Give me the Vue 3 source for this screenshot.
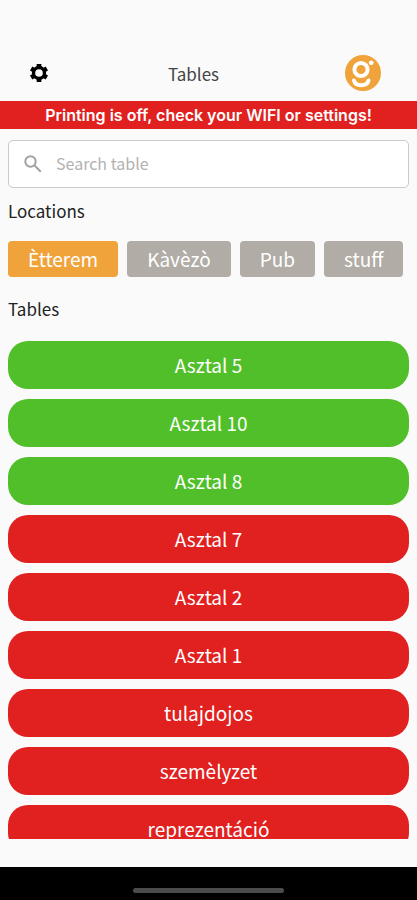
<template>
    <div class="screen">
        <header class="header">
            <button class="icon-button" aria-label="Settings">
                <svg class="gear" viewBox="0 0 24 24" fill="none" stroke="#000">
                    <circle cx="12" cy="12" r="6.600" stroke-width="4" />
                    <g stroke-width="5.600" stroke-linecap="butt">
                        <path d="M12 1.200v4M12 18.800v4" />
                        <path d="M2.600 6.600l3.500 2M17.900 15.400l3.500 2" />
                        <path d="M2.600 17.400l3.500-2M17.900 8.600l3.500-2" />
                    </g>
                </svg>
            </button>
            <h1 class="title">Tables</h1>
            <div class="logo-box">
                <svg class="logo" viewBox="0 0 36 36" aria-hidden="true">
                    <circle cx="18" cy="18" r="18" fill="#f0a33b" />
                    <circle cx="16" cy="14.500" r="6.600" fill="none" stroke="#fff" stroke-width="4" />
                    <path d="M9 25.500c1.500 6.300 13 6.300 14.500 0" fill="none" stroke="#fff" stroke-width="4" stroke-linecap="round" />
                    <circle cx="26.200" cy="7.800" r="2.400" fill="#fff" />
                </svg>
            </div>
        </header>
        <p class="banner">Printing is off, check your WIFI or settings!</p>
        <main class="content">
            <label class="search">
                <svg class="search-icon" viewBox="0 0 18 18" fill="none" stroke="#a5a3a1" stroke-width="2">
                    <circle cx="6.500" cy="6.500" r="5.200" />
                    <path d="M10.500 10.500l6.300 6.300" />
                </svg>
                <input type="text" v-model="search" placeholder="Search table" aria-label="Search table">
            </label>
            <h2 class="section-title">Locations</h2>
            <div class="locations">
                <button
                    v-for="location in locations"
                    :key="location"
                    class="location"
                    :class="{ active: location === selected }"
                    @click="selected = location"
                >{{ location }}</button>
            </div>
            <h2 class="section-title">Tables</h2>
            <div class="tables">
                <button
                    v-for="table in filteredTables"
                    :key="table.name"
                    class="table"
                    :class="{ free: table.free }"
                >{{ table.name }}</button>
            </div>
        </main>
        <footer class="nav-bar">
            <span class="handle"></span>
        </footer>
    </div>
</template>

<script setup>
import { ref, computed } from 'vue'

const search = ref('')
const selected = ref('Ètterem')
const locations = ['Ètterem', 'Kàvèzò', 'Pub', 'stuff']

const tables = ref([
    { name: 'Asztal 5', free: true },
    { name: 'Asztal 10', free: true },
    { name: 'Asztal 8', free: true },
    { name: 'Asztal 7', free: false },
    { name: 'Asztal 2', free: false },
    { name: 'Asztal 1', free: false },
    { name: 'tulajdojos', free: false },
    { name: 'szemèlyzet', free: false },
    { name: 'reprezentáció', free: false }
])

const filteredTables = computed(() =>
    tables.value.filter((table) => table.name.toLowerCase().includes(search.value.toLowerCase()))
)
</script>

<style>
body {
    margin: 0;
    background-color: #fafafa;
}
</style>

<style scoped>
* {
    box-sizing: border-box;
    margin: 0;
    padding: 0;
}
.screen {
    height: 100vh;
    display: flex;
    flex-direction: column;
    background-color: #fafafa;
    font-family: "Noto Sans CJK SC", "Noto Sans", sans-serif;
    color: #222;
}
button {
    border: none;
    font-family: inherit;
    cursor: pointer;
}
.header {
    display: flex;
    justify-content: space-between;
    align-items: center;
    padding: 55px 28px 10px;
}
.icon-button {
    display: flex;
    padding: 1px;
    background: none;
}
.gear {
    width: 20px;
    height: 20px;
}
.title {
    padding-top: 2px;
    font-size: 17px;
    font-weight: 400;
    line-height: 24px;
    color: #444;
}
.logo-box {
    display: flex;
    padding: 0 8px;
}
.logo {
    width: 36px;
    height: 36px;
}
.banner {
    background-color: #e12120;
    color: white;
    font-family: Inter, sans-serif;
    font-size: 16px;
    font-weight: 600;
    line-height: 28px;
    text-align: center;
}
.content {
    flex: 1;
    min-height: 0;
    display: flex;
    flex-direction: column;
    padding: 11px 8px 28px;
}
.search {
    flex: none;
    display: flex;
    align-items: center;
    gap: 14px;
    height: 48px;
    padding: 0 15px;
    border: 1px solid #ccc9c7;
    border-radius: 5px;
    background-color: white;
}
.search-icon {
    width: 18px;
    height: 18px;
}
.search input {
    flex: 1;
    min-width: 0;
    padding-bottom: 2px;
    border: none;
    outline: none;
    background: none;
    font-family: inherit;
    font-size: 16px;
    line-height: 24px;
}
.search input::placeholder {
    color: #b3b1af;
    opacity: 1;
}
.section-title {
    font-size: 17px;
    font-weight: 400;
    line-height: 24px;
    padding: 11px 0 9px;
}
.locations {
    flex: none;
    display: flex;
    gap: 9px;
    padding: 9px 0;
}
.location {
    height: 36px;
    padding: 0 20px;
    border-radius: 4px;
    background-color: #b1aca5;
    color: white;
    font-size: 19px;
    line-height: 36px;
}
.location.active {
    background-color: #f0a33b;
}
.tables {
    flex: 1;
    min-height: 0;
    display: flex;
    flex-direction: column;
    gap: 10px;
    margin-top: 11px;
    overflow-y: auto;
    scrollbar-width: none;
}
.table {
    flex: none;
    height: 48px;
    border-radius: 20px;
    background-color: #e12120;
    color: white;
    font-size: 19px;
    line-height: 48px;
}
.table.free {
    background-color: #51bf29;
}
.nav-bar {
    display: flex;
    justify-content: center;
    padding: 21px 0 7px;
    background-color: black;
}
.handle {
    width: 36%;
    height: 5px;
    border-radius: 3px;
    background-color: #4c4c4c;
}
</style>
